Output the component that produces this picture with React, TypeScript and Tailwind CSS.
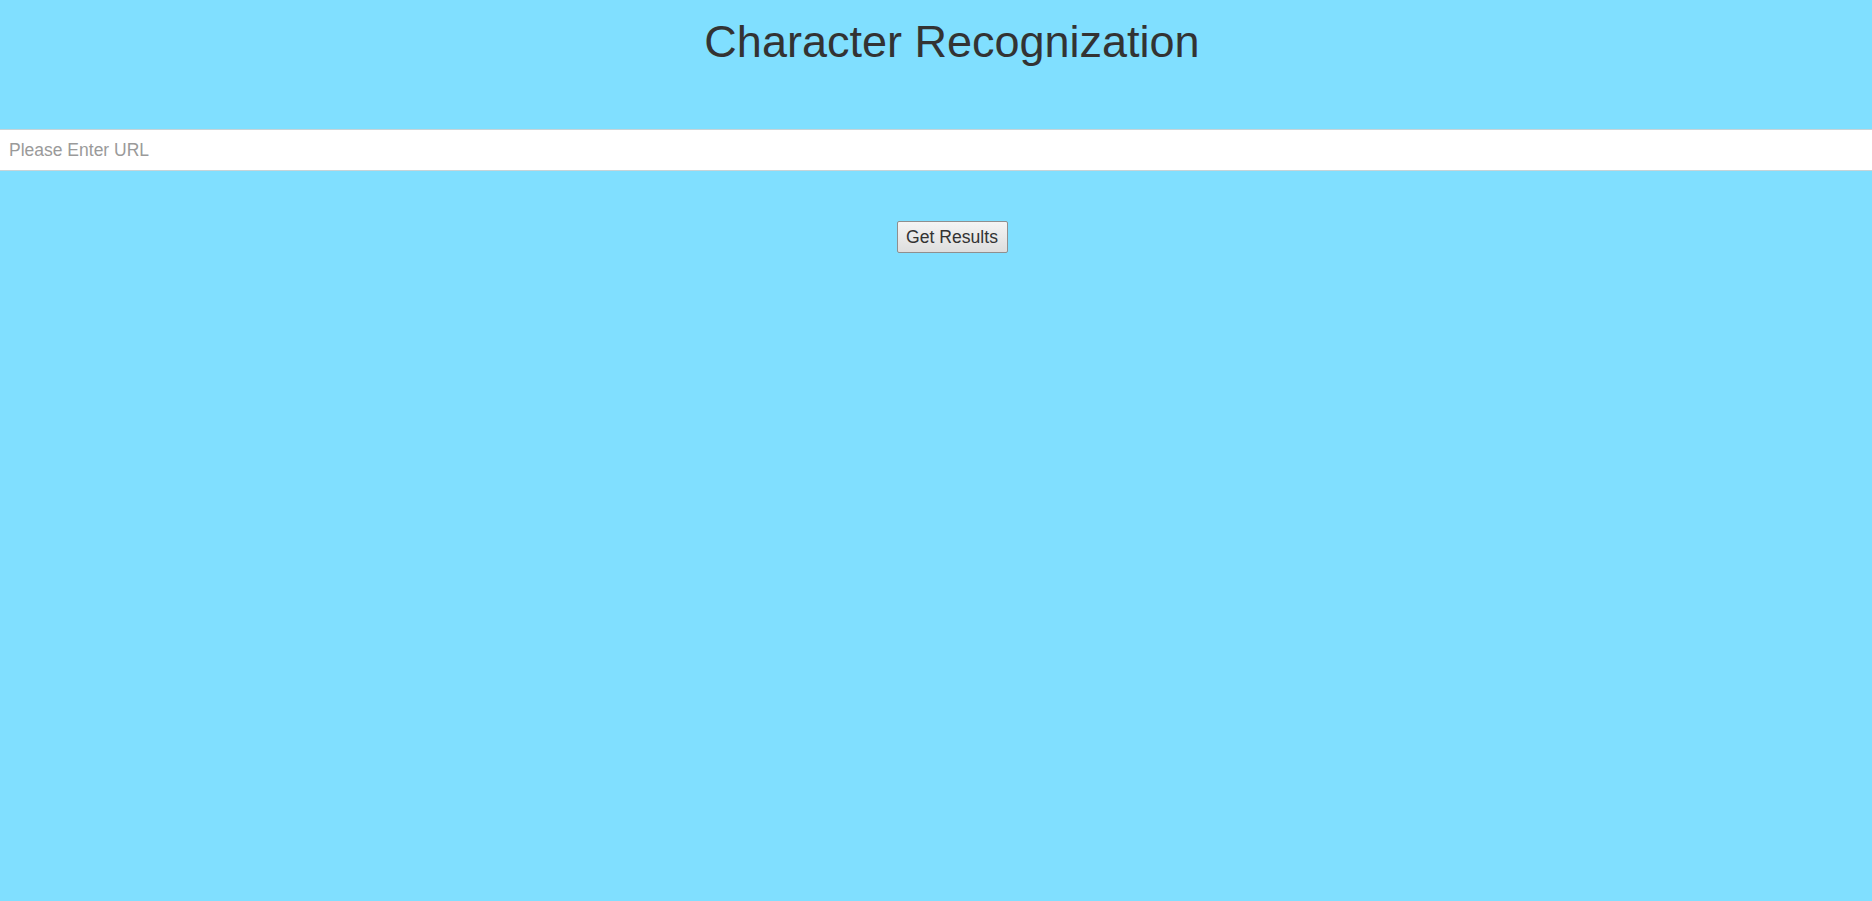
import React, { useState } from 'react';

const App: React.FC = () => {
  const [url, setUrl] = useState('');

  return (
    <div className="min-h-screen w-full bg-[#80dfff] pt-[16px] text-[#333333]" style={{ fontFamily: '"Liberation Sans", Arial, sans-serif' }}>
      <div className="pl-8">
        <h1 className="text-center text-[45px] leading-[52px] font-normal">
          Character Recognization
        </h1>
      </div>

      <input
        type="text"
        value={url}
        onChange={(e) => setUrl(e.target.value)}
        placeholder="Please Enter URL"
        className="mt-[61px] block h-[42px] w-full border-y border-[#c8d4d8] bg-white pr-2 pl-[9px] text-[17.5px] text-[#333333] outline-none placeholder:text-[#9a9a9a]"
      />

      <div className="mt-[50px] flex justify-center pl-8">
        <button className="h-[32px] w-[111px] rounded-[2px] border border-[#8f8f8f] bg-gradient-to-b from-[#f4f4f4] to-[#dedede] text-[17.6px] text-[#333333]">
          Get Results
        </button>
      </div>
    </div>
  );
};

export default App;
